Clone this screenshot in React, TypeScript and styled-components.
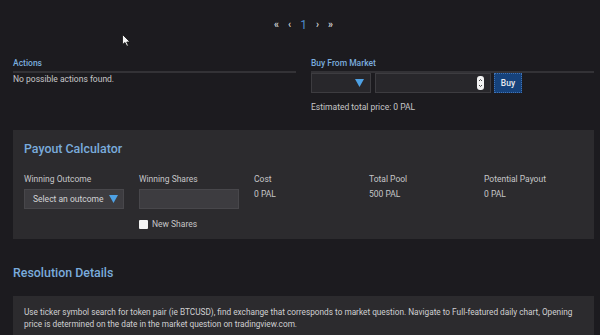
import React from 'react'
import styled, { createGlobalStyle } from 'styled-components'

const GlobalStyle = createGlobalStyle`
  html, body {
    margin: 0;
    padding: 0;
    background: #1c1b1f;
    color: #c6c6c8;
    font-family: Roboto, "Liberation Sans", sans-serif;
    font-size: 8.5px;
    overflow: hidden;
  }
`

const Page = styled.div`
  position: relative;
  padding: 18px 6px 0 13px;
  height: 335px;
  box-sizing: border-box;
`

const Pager = styled.div`
  display: flex;
  justify-content: center;
  align-items: center;
  gap: 7px;
  height: 14px;
`

const PagerItem = styled.span<{ active?: boolean }>`
  font-size: ${(p) => (p.active ? '12px' : '10px')};
  font-weight: ${(p) => (p.active ? 400 : 700)};
  color: ${(p) => (p.active ? '#4f8bcb' : '#cfcfd2')};
  line-height: 14px;
  padding: 0 1px;
`

const Columns = styled.div`
  display: grid;
  grid-template-columns: 1fr 1fr;
  gap: 15px;
  margin-top: 25px;
`

const SectionTitle = styled.div`
  color: #7aabdc;
  font-weight: 500;
  line-height: 12px;
  padding-bottom: 2px;
  border-bottom: 2px solid #333236;
`

const Note = styled.div<{ gap?: number }>`
  line-height: 12px;
  margin-top: ${(p) => p.gap || 0}px;
`

const BuyRow = styled.div`
  display: flex;
  gap: 4px;
  height: 20px;
`

const Box = styled.div<{ width: number }>`
  width: ${(p) => p.width}px;
  box-sizing: border-box;
  background: #28272b;
  border: 1px solid #3d3c40;
  display: flex;
  align-items: center;
  justify-content: flex-end;
  padding-right: 6px;
`

const BuyButton = styled.button`
  width: 28px;
  box-sizing: border-box;
  margin-left: -1px;
  background: #16427b;
  border: 1px dotted #3f73b6;
  color: #e6e9ee;
  font-family: Roboto, "Liberation Sans", sans-serif;
  font-size: 8.5px;
  font-weight: 500;
  padding: 0;
`

const Panel = styled.div`
  background: #2c2b2e;
  margin-top: 17px;
  padding: 11px 11px 10px;
`

const Heading = styled.div<{ top?: number }>`
  color: #7aabdc;
  font-size: 12.4px;
  font-weight: 500;
  line-height: 16px;
  margin-top: ${(p) => p.top || 0}px;
`

const CalcGrid = styled.div`
  display: grid;
  grid-template-columns: repeat(5, 100px);
  column-gap: 15px;
  margin-top: 16px;
`

const Field = styled.div`
  display: flex;
  flex-direction: column;
`

const FieldLabel = styled.div`
  line-height: 12px;
`

const FieldValue = styled.div`
  line-height: 12px;
  margin-top: 3px;
`

const Control = styled.div`
  margin-top: 4px;
  height: 20px;
  box-sizing: border-box;
  background: #3d3c40;
  border: 1px solid #48474b;
  display: flex;
  align-items: center;
  justify-content: space-between;
  padding: 0 5px 0 8px;
  color: #d4d4d6;
`

const CheckRow = styled.label`
  display: flex;
  align-items: center;
  gap: 4px;
  margin-top: 10px;
  line-height: 10px;
`

const CheckBox = styled.span`
  width: 9px;
  height: 9px;
  background: #f4f4f4;
  border-radius: 1px;
`

const Details = styled.div`
  background: #2c2b2e;
  margin-top: 15px;
  padding: 10px 11px;
  font-size: 8.25px;
  line-height: 12px;
  color: #d0d0d2;
`

const Cursor = styled.svg`
  position: absolute;
  left: 122px;
  top: 34px;
`

const Arrow = () => (
  <svg width="9" height="8" viewBox="0 0 9 8">
    <polygon points="0,0 9,0 4.5,8" fill="#4ea1e4" />
  </svg>
)

const Spinner = () => (
  <svg width="7" height="14" viewBox="0 0 7 14">
    <rect x="0" y="0" width="7" height="14" rx="3" fill="#f2f2f2" />
    <polyline points="2,5 3.5,3.5 5,5" fill="none" stroke="#444" strokeWidth="1" />
    <polyline points="2,9 3.5,10.5 5,9" fill="none" stroke="#444" strokeWidth="1" />
  </svg>
)

const fields = [
  { label: 'Cost', value: '0 PAL' },
  { label: 'Total Pool', value: '500 PAL' },
  { label: 'Potential Payout', value: '0 PAL' },
]

const App: React.FunctionComponent = () => (
  <Page>
    <GlobalStyle />
    <Pager>
      <PagerItem>«</PagerItem>
      <PagerItem>‹</PagerItem>
      <PagerItem active>1</PagerItem>
      <PagerItem>›</PagerItem>
      <PagerItem>»</PagerItem>
    </Pager>

    <Columns>
      <div>
        <SectionTitle>Actions</SectionTitle>
        <Note>No possible actions found.</Note>
      </div>
      <div>
        <SectionTitle>Buy From Market</SectionTitle>
        <BuyRow>
          <Box width={60}>
            <Arrow />
          </Box>
          <Box width={116}>
            <Spinner />
          </Box>
          <BuyButton>Buy</BuyButton>
        </BuyRow>
        <Note gap={8}>Estimated total price: 0 PAL</Note>
      </div>
    </Columns>

    <Panel>
      <Heading>Payout Calculator</Heading>
      <CalcGrid>
        <Field>
          <FieldLabel>Winning Outcome</FieldLabel>
          <Control>
            Select an outcome
            <Arrow />
          </Control>
        </Field>
        <Field>
          <FieldLabel>Winning Shares</FieldLabel>
          <Control />
          <CheckRow>
            <CheckBox />
            New Shares
          </CheckRow>
        </Field>
        {fields.map((f) => (
          <Field key={f.label}>
            <FieldLabel>{f.label}</FieldLabel>
            <FieldValue>{f.value}</FieldValue>
          </Field>
        ))}
      </CalcGrid>
    </Panel>

    <Heading top={26}>Resolution Details</Heading>
    <Details>
      Use ticker symbol search for token pair (ie BTCUSD), find exchange that corresponds to market
      question. Navigate to Full-featured daily chart, Opening price is determined on the date in the
      market question on tradingview.com.
    </Details>

    <Cursor width="9" height="13" viewBox="0 0 9 13">
      <polygon points="0.5,0.5 0.5,10.5 3,8.5 4.8,12.3 6.4,11.6 4.7,8 8,8" fill="#f4f4f4" stroke="#111" strokeWidth="0.8" />
    </Cursor>
  </Page>
)

export default App
